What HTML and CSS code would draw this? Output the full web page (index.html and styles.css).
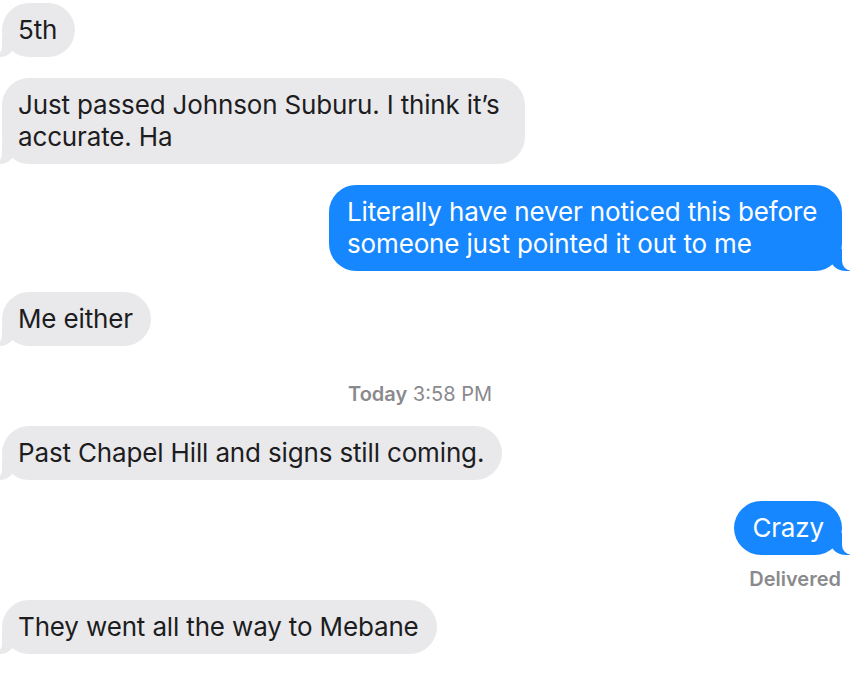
FILE: index.html
```html
<!DOCTYPE html>
<html>
<head>
<meta charset="utf-8">
<link rel="stylesheet" href="styles.css">
</head>
<body>
<div class="thread">
  <div class="bubble recv first">5th</div>
  <div class="bubble recv wide">Just passed Johnson Suburu. I think it’s accurate. Ha</div>
  <div class="bubble sent wide-sent">Literally have never noticed this before someone just pointed it out to me</div>
  <div class="bubble recv">Me either</div>
  <div class="stamp"><b>Today</b> 3:58 PM</div>
  <div class="bubble recv after-stamp">Past Chapel Hill and signs still coming.</div>
  <div class="bubble sent">Crazy</div>
  <div class="delivered">Delivered</div>
  <div class="bubble recv after-delivered">They went all the way to Mebane</div>
</div>
</body>
</html>
```

FILE: styles.css
```css
html, body {
  margin: 0;
  padding: 0;
  background: #ffffff;
}

body {
  width: 866px;
  height: 686px;
  overflow: hidden;
  font-family: Inter, "Noto Sans", "Liberation Sans", sans-serif;
}

.thread {
  display: flex;
  flex-direction: column;
  align-items: flex-start;
  padding: 3px 24px 0 2px;
}

.bubble {
  position: relative;
  box-sizing: border-box;
  padding: 11px 18px 11px 16px;
  font-size: 26px;
  line-height: 32px;
  border-radius: 27px;
  margin-top: 21px;
  letter-spacing: -0.15px;
}

.bubble.first {
  margin-top: 0;
}

.recv {
  background: #e9e9eb;
  color: #1d1d1f;
  align-self: flex-start;
}

.sent {
  background: #1787ff;
  color: #ffffff;
  align-self: flex-end;
  padding-left: 18px;
}

.wide {
  width: 523px;
  padding-right: 8px;
}

.wide-sent {
  width: 513px;
  padding-right: 8px;
}

/* tails */
.recv::before,
.recv::after,
.sent::before,
.sent::after {
  content: "";
  position: absolute;
  bottom: 0;
  height: 22px;
}

.recv::before {
  left: -7px;
  width: 20px;
  background: #e9e9eb;
  border-bottom-right-radius: 16px 14px;
}

.recv::after {
  left: -26px;
  width: 26px;
  background: #ffffff;
  border-bottom-right-radius: 10px;
}

.sent::before {
  right: -8px;
  width: 20px;
  background: #1787ff;
  border-bottom-left-radius: 16px 14px;
}

.sent::after {
  right: -26px;
  width: 26px;
  background: #ffffff;
  border-bottom-left-radius: 10px;
}

.stamp {
  align-self: stretch;
  text-align: center;
  margin-top: 37px;
  padding-right: 4px;
  font-size: 20px;
  line-height: 22px;
  color: #8a8a8e;
}

.stamp b {
  font-weight: 600;
}

.after-stamp {
  margin-top: 21px;
}

.delivered {
  align-self: flex-end;
  margin-top: 13px;
  padding-right: 1px;
  font-size: 20px;
  line-height: 22px;
  font-weight: 600;
  color: #8a8a8e;
}

.after-delivered {
  margin-top: 10px;
}
```
